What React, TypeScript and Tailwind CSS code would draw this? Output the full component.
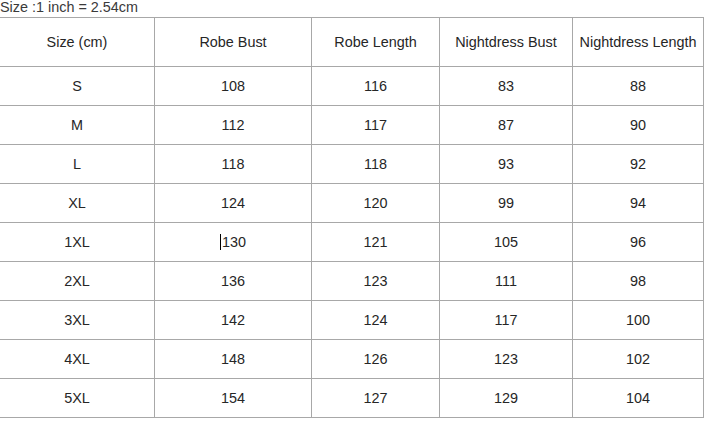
const headers = ["Size (cm)", "Robe Bust", "Robe Length", "Nightdress Bust", "Nightdress Length"]

const rows = [
  ["S", "108", "116", "83", "88"],
  ["M", "112", "117", "87", "90"],
  ["L", "118", "118", "93", "92"],
  ["XL", "124", "120", "99", "94"],
  ["1XL", "130", "121", "105", "96"],
  ["2XL", "136", "123", "111", "98"],
  ["3XL", "142", "124", "117", "100"],
  ["4XL", "148", "126", "123", "102"],
  ["5XL", "154", "127", "129", "104"],
]

const widths = ["w-[155px]", "w-[157px]", "w-[128px]", "w-[133px]", "w-[131px]"]

export default function App() {
  return (
    <div className="w-[725px] h-[439px] bg-white overflow-hidden text-[#262626] font-['Liberation_Sans',Arial,sans-serif]">
      <div className="h-[17px] text-[14.4px] leading-[16px] -mt-[1px] text-[#3a3a3a]">Size :1 inch = 2.54cm</div>
      <table className="-ml-[1px] border-collapse text-[14.4px] mt-[1px]">
        <thead>
          <tr className="h-[49px]">
            {headers.map((h, i) => (
              <th key={h} className={`${widths[i]} border border-[#a8a8a8] font-normal text-center p-0 pt-[2px]`}>
                {h}
              </th>
            ))}
          </tr>
        </thead>
        <tbody>
          {rows.map((r) => (
            <tr key={r[0]} className="h-[39px]">
              {r.map((c, i) => (
                <td key={i} className="border border-[#a8a8a8] text-center p-0 pt-[2px]">
                  {r[0] === "1XL" && i === 1 ? (
                    <span className="border-l border-black pl-[1px]">{c}</span>
                  ) : (
                    c
                  )}
                </td>
              ))}
            </tr>
          ))}
        </tbody>
      </table>
    </div>
  )
}
